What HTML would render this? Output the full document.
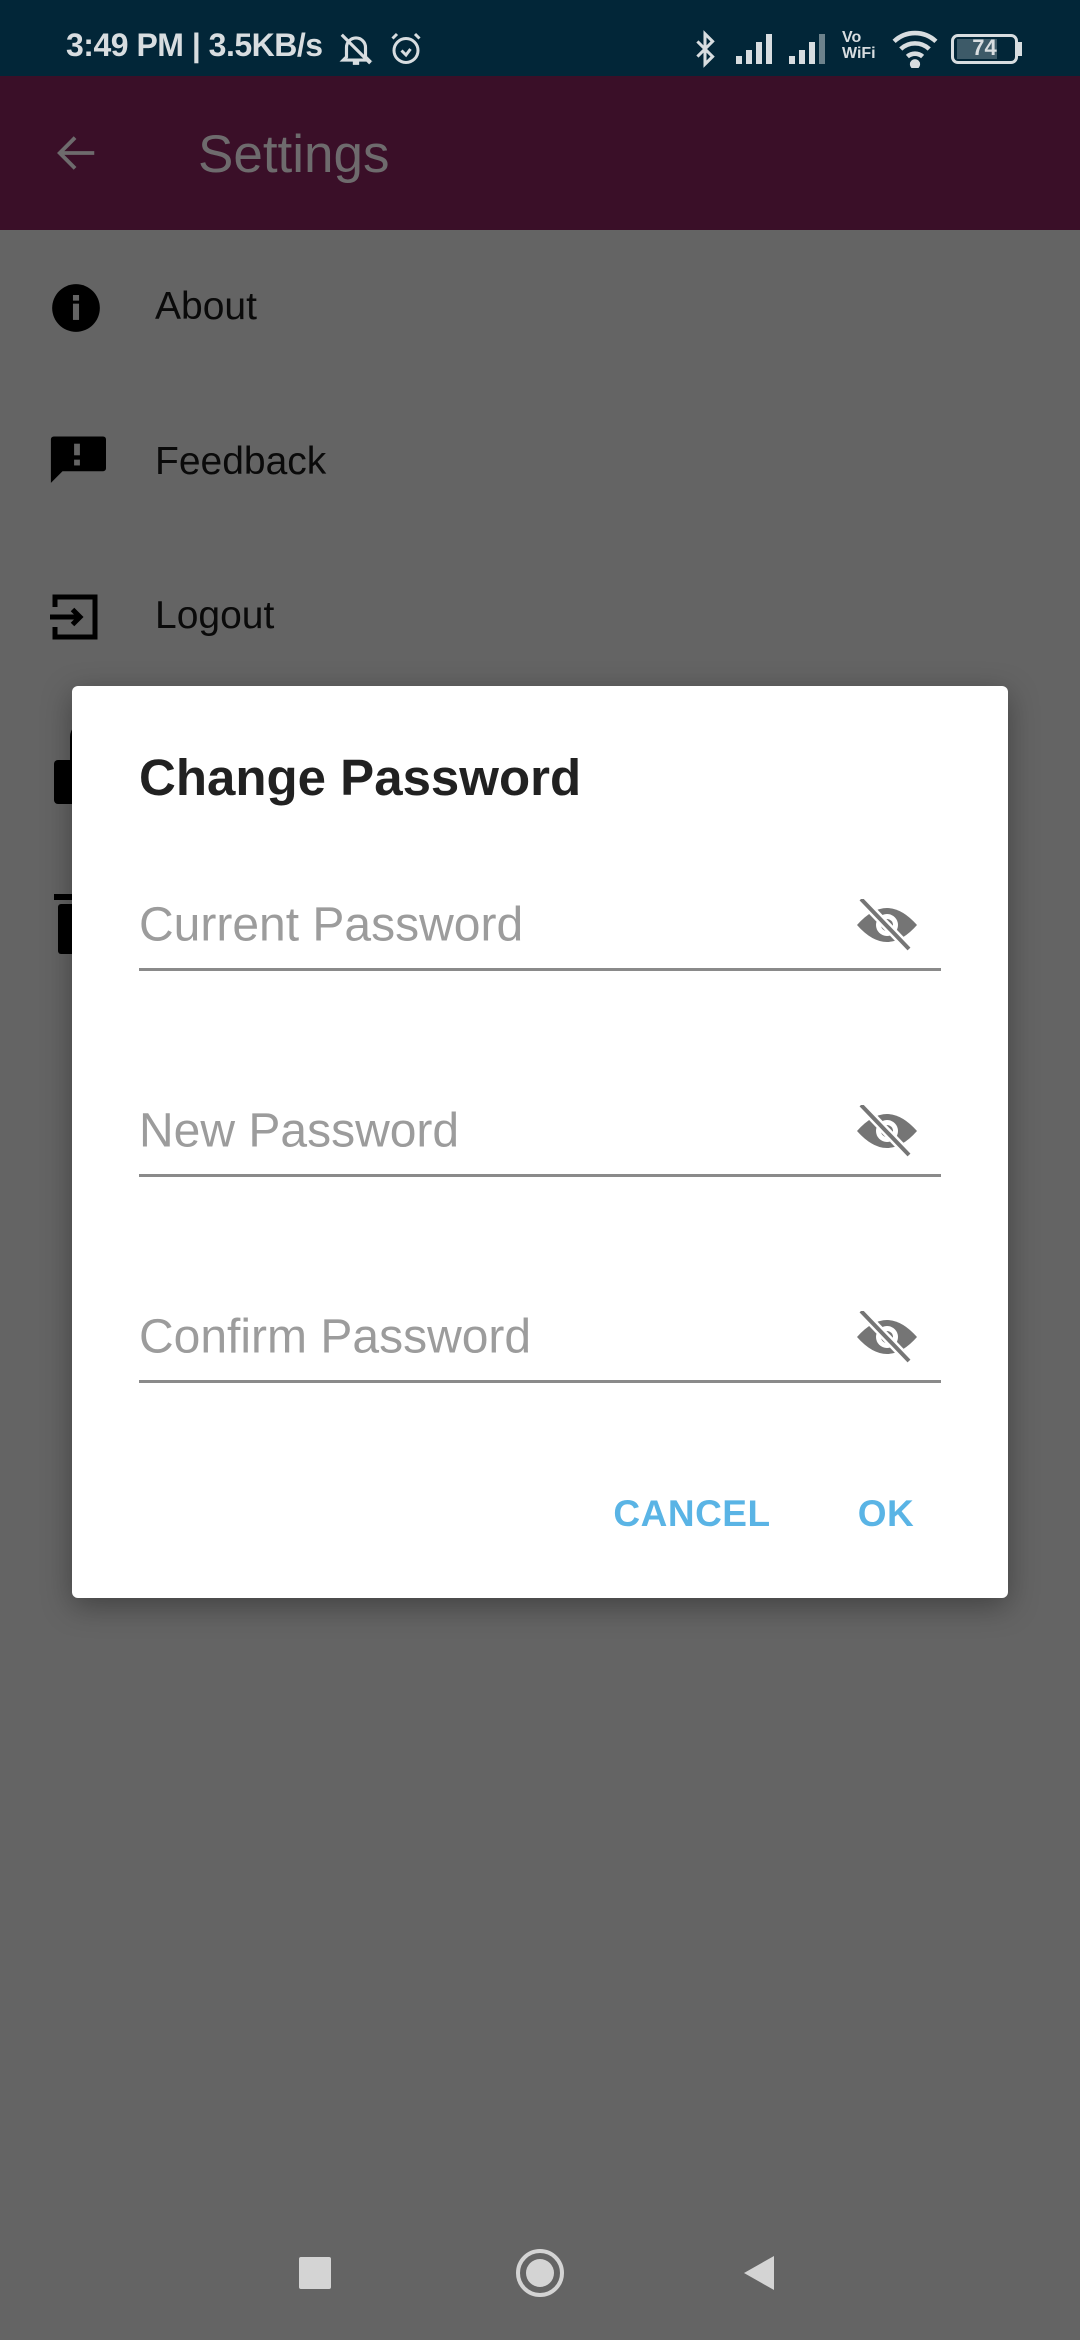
<!DOCTYPE html>
<html><head><meta charset="utf-8"><style>
*{margin:0;padding:0;box-sizing:border-box}
body{width:1080px;height:2340px;background:#646464;font-family:"Liberation Sans",Roboto,sans-serif;position:relative;overflow:hidden}
.abs{position:absolute}
.sb{left:0;top:0;width:1080px;height:76px;background:#022638;color:#d8dde0}
.ab{left:0;top:76px;width:1080px;height:154px;background:#3a0f28}
.item{left:155px;font-size:39px;color:#0a0a0a;transform:translateY(-50%)}
.dlg{left:72px;top:686px;width:936px;height:912px;background:#fff;border-radius:6px;box-shadow:0 8px 30px rgba(0,0,0,.35)}
.fld{left:139px;width:802px;border-bottom:3px solid #8a8a8a;height:0}
.ph{left:139px;font-size:48px;color:#9c9c9c;transform:translateY(-50%)}
.eye{left:856px;transform:translateY(-50%)}
.btn{font-size:37px;color:#5ab4e5;font-weight:bold;transform:translate(-50%,-50%);letter-spacing:0.5px}
</style></head><body>
<div class="abs sb">
 <div class="abs" style="left:66px;top:27px;font-size:32px;font-weight:bold;letter-spacing:-0.5px">3:49 PM | 3.5KB/s</div>
 <svg class="abs" style="left:336px;top:30px" width="40" height="38" viewBox="0 0 24 24" fill="none" stroke="#d8dde0" stroke-width="2"><path d="M6 17V11a6 6 0 0 1 12 0v6l2 2H4zM10 21h4M3 3l18 18"/></svg>
 <svg class="abs" style="left:388px;top:30px" width="36" height="38" viewBox="0 0 24 24" fill="none" stroke="#d8dde0" stroke-width="2"><circle cx="12" cy="13" r="8"/><path d="M9 13l3 3 3-4M3 5l3-3M21 5l-3-3"/></svg>
 <svg class="abs" style="left:690px;top:30px" width="30" height="38" viewBox="0 0 12 20" fill="none" stroke="#d8dde0" stroke-width="1.6"><path d="M2 6l8 8-4 4V2l4 4-8 8"/></svg>
 <svg class="abs" style="left:735px;top:32px" width="42" height="32" viewBox="0 0 20 16" fill="#d8dde0"><rect x="0" y="12" width="3" height="4"/><rect x="5" y="9" width="3" height="7"/><rect x="10" y="5" width="3" height="11"/><rect x="15" y="1" width="3" height="15"/></svg>
 <svg class="abs" style="left:788px;top:32px" width="42" height="32" viewBox="0 0 20 16" fill="#d8dde0"><rect x="0" y="12" width="3" height="4"/><rect x="5" y="9" width="3" height="7"/><rect x="10" y="5" width="3" height="11"/><rect x="15" y="1" width="3" height="15" opacity=".5"/></svg>
 <div class="abs" style="left:842px;top:30px;font-size:16px;line-height:16px;font-weight:bold">Vo<br>WiFi</div>
 <svg class="abs" style="left:892px;top:30px" width="46" height="38" viewBox="0 0 24 20" fill="none" stroke="#d8dde0" stroke-width="2.4"><path d="M1 6a16 16 0 0 1 22 0M4.5 10a11 11 0 0 1 15 0M8 14a6 6 0 0 1 8 0"/><circle cx="12" cy="18" r="1.5" fill="#d8dde0"/></svg>
 <div class="abs" style="left:951px;top:34px;width:67px;height:30px;border:3px solid #d8dde0;border-radius:7px"><div style="position:absolute;left:3px;top:2px;width:40px;height:20px;background:#3d5a68"></div><div style="position:absolute;left:0;top:-2px;width:61px;text-align:center;font-size:22px;font-weight:bold">74</div></div>
 <div class="abs" style="left:1018px;top:42px;width:4px;height:14px;background:#d8dde0"></div>
</div>
<div class="abs ab">
 <svg class="abs" style="left:52px;top:54px" width="50" height="46" viewBox="0 0 24 24" fill="none" stroke="#6e6b6d" stroke-width="2"><path d="M21 12H4M11 4l-8 8 8 8"/></svg>
 <div class="abs" style="left:198px;top:48px;font-size:53px;color:#6e6b6d">Settings</div>
</div>
<svg class="abs" style="left:48px;top:282px" width="56" height="52" viewBox="0 0 24 24"><circle cx="12" cy="12" r="11" fill="#000"/><rect x="10.6" y="10" width="2.8" height="7.5" fill="#646464"/><rect x="10.6" y="6" width="2.8" height="2.6" fill="#646464"/></svg>
<div class="abs item" style="top:307px">About</div>
<svg class="abs" style="left:48px;top:433px" width="58" height="62" viewBox="0 0 20 21"><path d="M1 2a1 1 0 0 1 1-1h17a1 1 0 0 1 1 1v10a1 1 0 0 1-1 1H5l-4 4z" fill="#000"/><rect x="9" y="3.5" width="2" height="4" fill="#646464"/><rect x="9" y="9" width="2" height="2" fill="#646464"/></svg>
<div class="abs item" style="top:462px">Feedback</div>
<svg class="abs" style="left:50px;top:592px" width="50" height="50" viewBox="0 0 20 20" fill="none" stroke="#000" stroke-width="2"><path d="M2 6V2h16v16H2v-4"/><path d="M0 10h12M9 7l3 3-3 3"/></svg>
<div class="abs item" style="top:616px">Logout</div>
<div class="abs" style="left:70px;top:722px;width:30px;height:40px;border:8px solid #000;border-radius:16px 16px 0 0"></div>
<div class="abs" style="left:54px;top:760px;width:46px;height:44px;background:#000;border-radius:4px"></div>
<div class="abs" style="left:58px;top:904px;width:36px;height:50px;background:#000;border-radius:3px"></div>
<div class="abs" style="left:54px;top:894px;width:44px;height:6px;background:#000"></div>
<div class="abs dlg"></div>
<div class="abs" style="left:139px;top:748px;font-size:51px;color:#212121;font-weight:bold">Change Password</div>
<div class="abs ph" style="top:925px">Current Password</div>
<div class="abs fld" style="top:968px"></div>
<div class="abs ph" style="top:1131px">New Password</div>
<div class="abs fld" style="top:1174px"></div>
<div class="abs ph" style="top:1337px">Confirm Password</div>
<div class="abs fld" style="top:1380px"></div>
<svg class="abs eye" style="top:925px" width="62" height="52" viewBox="0 0 62 52"><path d="M1 26Q31 -8 61 26Q31 60 1 26z" fill="#757575"/><circle cx="31" cy="26" r="11" fill="#fff"/><circle cx="31" cy="26" r="6" fill="#757575"/><path d="M5 0L53 50" stroke="#fff" stroke-width="9"/><path d="M5 0L53 50" stroke="#757575" stroke-width="4"/></svg>
<svg class="abs eye" style="top:1131px" width="62" height="52" viewBox="0 0 62 52"><path d="M1 26Q31 -8 61 26Q31 60 1 26z" fill="#757575"/><circle cx="31" cy="26" r="11" fill="#fff"/><circle cx="31" cy="26" r="6" fill="#757575"/><path d="M5 0L53 50" stroke="#fff" stroke-width="9"/><path d="M5 0L53 50" stroke="#757575" stroke-width="4"/></svg>
<svg class="abs eye" style="top:1337px" width="62" height="52" viewBox="0 0 62 52"><path d="M1 26Q31 -8 61 26Q31 60 1 26z" fill="#757575"/><circle cx="31" cy="26" r="11" fill="#fff"/><circle cx="31" cy="26" r="6" fill="#757575"/><path d="M5 0L53 50" stroke="#fff" stroke-width="9"/><path d="M5 0L53 50" stroke="#757575" stroke-width="4"/></svg>
<div class="abs btn" style="left:692px;top:1514px">CANCEL</div>
<div class="abs btn" style="left:886px;top:1514px">OK</div>
<div class="abs" style="left:299px;top:2257px;width:32px;height:32px;background:#d4d4d4;border-radius:2px"></div>
<div class="abs" style="left:516px;top:2249px;width:48px;height:48px;border:4px solid #d4d4d4;border-radius:50%"><div style="position:absolute;left:6px;top:6px;width:28px;height:28px;background:#d4d4d4;border-radius:50%"></div></div>
<svg class="abs" style="left:742px;top:2255px" width="34" height="36" viewBox="0 0 34 36"><path d="M32 1V35L2 18z" fill="#d4d4d4"/></svg>
</body></html>
